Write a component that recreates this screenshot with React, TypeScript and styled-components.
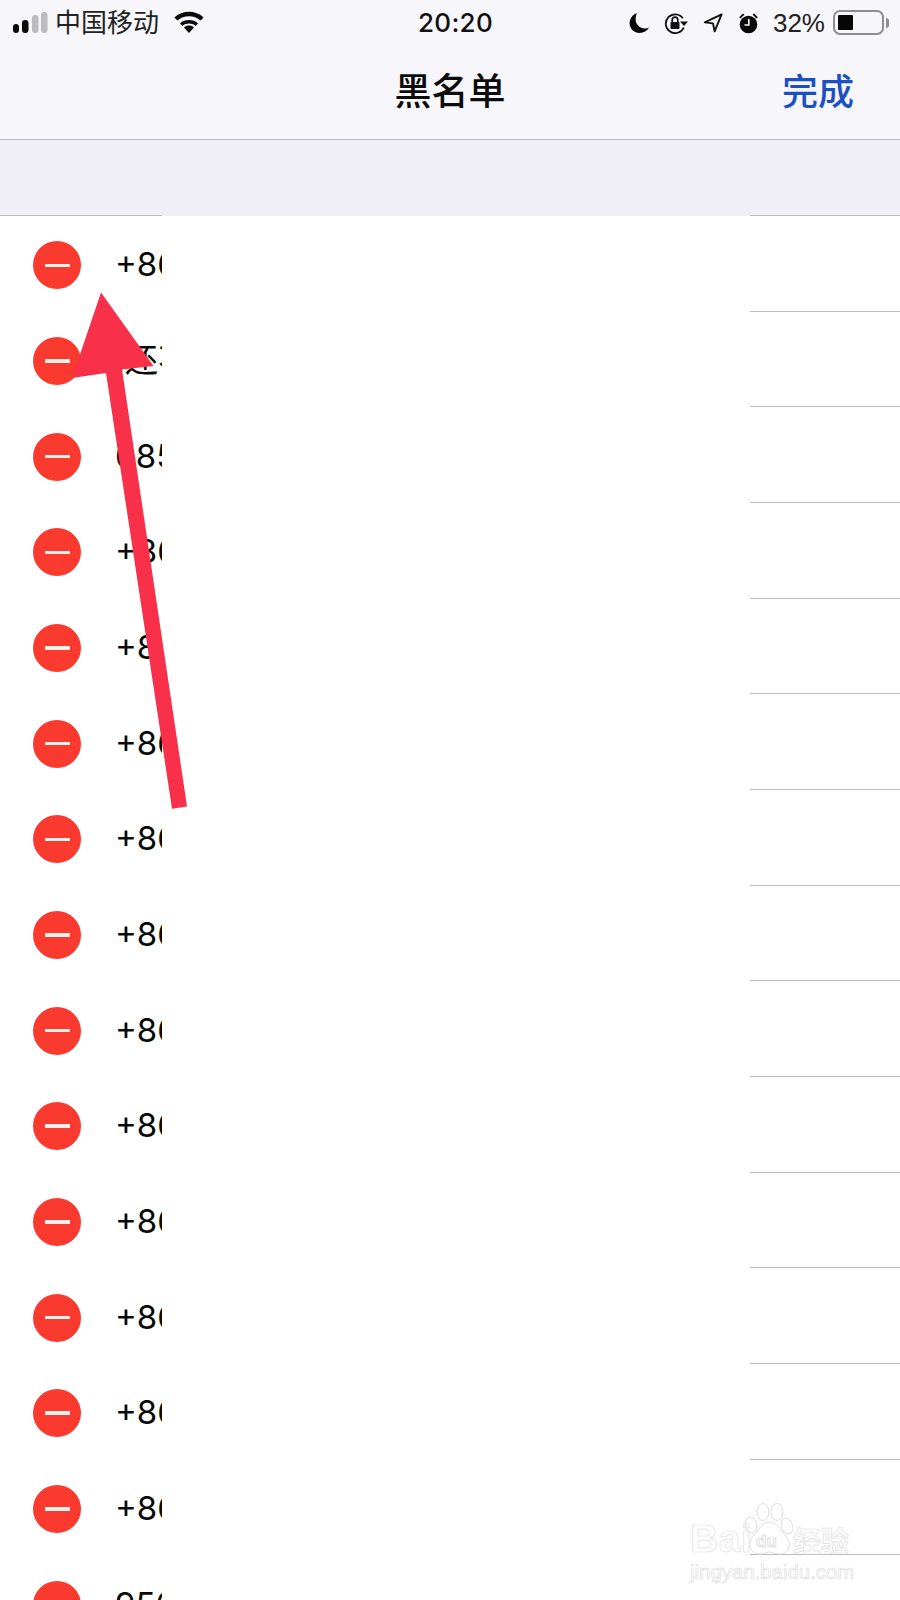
import React from "react";
import styled, { createGlobalStyle } from "styled-components";

const Global = createGlobalStyle`
  html, body { margin: 0; padding: 0; background: #fff; }
  #root { width: 900px; height: 1600px; }
`;

const Page = styled.div`
  position: relative;
  width: 900px;
  height: 1600px;
  overflow: hidden;
  background: #fff;
  font-family: "Liberation Sans", "Noto Sans CJK SC", sans-serif;
`;

const Header = styled.header`
  background: #f7f6fb;
  border-bottom: 1px solid #bdbcc0;
`;

const StatusBar = styled.div`
  height: 46px;
  display: grid;
  grid-template-columns: 1fr auto 1fr;
  align-items: center;
  padding: 0 11px 0 13px;
  color: #111;
`;

const StatusLeft = styled.div`
  display: flex;
  align-items: center;
`;

const StatusRight = styled.div`
  display: flex;
  align-items: center;
  justify-content: flex-end;
`;

const Carrier = styled.span`
  font-family: "Noto Sans CJK SC", sans-serif;
  font-size: 26px;
  line-height: 46px;
  margin: -4px 15px 0 6px;
  color: #222;
`;

const Clock = styled.span`
  font-family: "Inter", "Liberation Sans", sans-serif;
  font-size: 26px;
  font-weight: 500;
  line-height: 46px;
  letter-spacing: 0.3px;
  margin-left: 9px;
  color: #111;
`;

const Percent = styled.span`
  font-size: 26px;
  line-height: 46px;
  margin: 0 8px 0 14px;
  color: #222;
`;

const StatusIcon = styled.svg<{ $gap?: number }>`
  display: block;
  flex: none;
  margin-left: ${(p) => p.$gap ?? 0}px;
`;

const Battery = styled.span`
  box-sizing: border-box;
  width: 51px;
  height: 25px;
  margin-top: -1px;
  padding: 3px;
  border: 2px solid #8e8e90;
  border-radius: 7px;
  display: flex;
`;

const BatteryFill = styled.span`
  width: 15px;
  background: #060606;
  border-radius: 1px;
`;

const BatteryNub = styled.span`
  width: 3px;
  height: 10px;
  margin: 0 0 0 2px;
  background: #8e8e90;
  border-radius: 0 3px 3px 0;
`;

const NavBar = styled.nav`
  box-sizing: border-box;
  height: 93px;
  padding-bottom: 8px;
  display: grid;
  grid-template-columns: 1fr auto 1fr;
  align-items: center;
  font-family: "Noto Sans CJK SC", sans-serif;
  font-size: 36px;
  line-height: 46px;
`;

const Title = styled.h1`
  grid-column: 2;
  margin: 0;
  font-size: 37px;
  font-weight: 500;
  color: #0b0b0b;
`;

const Done = styled.span`
  justify-self: end;
  margin-right: 46px;
  font-weight: 500;
  color: #1b50c4;
`;

const SectionBand = styled.div`
  height: 76px;
  background: #f0eff7;
`;

const RowGrid = styled.div`
  display: grid;
  grid-template-columns: 162px 588px 150px;
`;

const TopRule = styled(RowGrid)`
  height: 1px;
  margin-top: -1px;
  position: relative;
`;

const RuleSegment = styled.div`
  height: 1px;
  background: #bcbcbe;
  align-self: end;
`;

const Row = styled(RowGrid)`
  height: 95.67px;
`;

const Left = styled.div`
  display: flex;
  flex-direction: column;
  min-width: 0;
`;

const Cell = styled.div`
  flex: 1;
  display: flex;
  align-items: center;
  padding-left: 33px;
  overflow: hidden;
`;

const Delete = styled.span`
  flex: none;
  box-sizing: border-box;
  width: 48px;
  height: 48px;
  margin-top: 4px;
  border-radius: 50%;
  background: #fb3a2f;
  display: flex;
  align-items: center;
  justify-content: center;
`;

const Minus = styled.span`
  width: 25px;
  height: 3.5px;
  background: #fcefea;
`;

const Phone = styled.span<{ $indent: number }>`
  flex: none;
  margin-left: ${(p) => 34 + p.$indent}px;
  margin-top: 2px;
  font-family: "Inter", "Noto Sans CJK SC", sans-serif;
  font-size: 33px;
  line-height: 40px;
  white-space: nowrap;
  color: #0a0a0a;
`;

const LeftRule = styled(RuleSegment)`
  margin-left: 43px;
`;

const Arrow = styled.svg`
  position: absolute;
  left: 0;
  top: 0;
  pointer-events: none;
`;

const Watermark = styled.div`
  position: absolute;
  left: 690px;
  top: 1503px;
  width: 170px;
  pointer-events: none;
  color: transparent;
  -webkit-text-stroke: 0.7px #dedede;
`;

const MarkTop = styled.div`
  display: flex;
  align-items: flex-end;
  height: 52px;
`;

const MarkBai = styled.span`
  font-size: 39px;
  line-height: 32px;
  font-weight: 700;
  letter-spacing: 0.5px;
  width: 55px;
`;

const MarkCn = styled.span`
  font-family: "Noto Sans CJK SC", sans-serif;
  font-size: 28px;
  font-weight: 700;
  line-height: 30px;
  white-space: nowrap;
`;

const MarkUrl = styled.div`
  margin-top: 6px;
  font-size: 20.4px;
  line-height: 22px;
  white-space: nowrap;
`;

const PawSvg = styled.svg`
  flex: none;
  display: block;
`;

const rows: { text: string; indent?: number }[] = [
  { text: "+86" },
  { text: "还不", indent: 10 },
  { text: "085" },
  ...Array.from({ length: 11 }, () => ({ text: "+86" })),
  { text: "956" },
];

export default function App() {
  return (
    <Page>
      <Global />
      <Header>
        <StatusBar>
          <StatusLeft>
            <StatusIcon width="36" height="24" viewBox="0 0 36 24">
              <rect x="0" y="13" width="6" height="9" rx="3" fill="#0b0b0b" />
              <rect x="9" y="9" width="6.5" height="13" rx="3" fill="#0b0b0b" />
              <rect x="19" y="4" width="6.5" height="18" rx="3" fill="#bcbcc0" />
              <rect x="28" y="1" width="6.5" height="21" rx="3" fill="#bcbcc0" />
            </StatusIcon>
            <Carrier>中国移动</Carrier>
            <StatusIcon width="30" height="24" viewBox="0 0 30 24">
              <path d="M15 22 L10 16.4 C13 14 17 14 20 16.4 Z" fill="#0b0b0b" />
              <path d="M6 12.4 C11 8 19 8 24 12.4 L21.6 15 C17.6 11.8 12.4 11.8 8.4 15 Z" fill="#0b0b0b" />
              <path d="M0.4 6.4 C8.8 -1 21.2 -1 29.6 6.4 L26.6 9.6 C20 3.8 10 3.8 3.4 9.6 Z" fill="#0b0b0b" />
            </StatusIcon>
          </StatusLeft>
          <Clock>20:20</Clock>
          <StatusRight>
            <StatusIcon width="21" height="22" viewBox="0 0 21 22">
              <path d="M8 1 C4 2.6 0.6 6.2 0.6 11 C0.6 16.8 5.2 21 10.6 21 C14.6 21 18.2 19 20.2 15.6 C19 16.2 17.4 16.4 16 16.4 C11 16.4 6.6 12.8 6.6 7.6 C6.6 5.2 7 3 8 1 Z" fill="#080808" />
            </StatusIcon>
            <StatusIcon $gap={14} width="25" height="22" viewBox="0 0 25 22">
              <path d="M18.8 6.2 A9.4 9.4 0 1 0 19.8 15.5" fill="none" stroke="#111" strokeWidth="1.8" />
              <path d="M16 9.5 H24 L20 14 Z" fill="#111" />
              <rect x="6.5" y="10" width="9" height="7" rx="1" fill="#111" />
              <path d="M8.2 10 V8 A2.8 2.8 0 0 1 13.8 8 V10" fill="none" stroke="#111" strokeWidth="1.7" />
            </StatusIcon>
            <StatusIcon $gap={14} width="20" height="20" viewBox="0 0 20 20">
              <path d="M18.6 1.4 L1.8 9.4 L10 10.4 L11.6 18.4 Z" fill="none" stroke="#111" strokeWidth="1.9" strokeLinejoin="round" />
            </StatusIcon>
            <StatusIcon $gap={15} width="21" height="22" viewBox="0 0 21 22">
              <circle cx="10.5" cy="12.5" r="8.8" fill="#080808" />
              <path d="M1.2 5.2 L5 1.6 L6.4 2.8 L2.4 6.6 Z M19.8 5.2 L16 1.6 L14.6 2.8 L18.6 6.6 Z" fill="#080808" />
              <path d="M10.8 7 V13 H6.5" fill="none" stroke="#f7f6fb" strokeWidth="1.6" />
            </StatusIcon>
            <Percent>32%</Percent>
            <Battery>
              <BatteryFill />
            </Battery>
            <BatteryNub />
          </StatusRight>
        </StatusBar>
        <NavBar>
          <Title>黑名单</Title>
          <Done>完成</Done>
        </NavBar>
      </Header>
      <SectionBand />
      <TopRule>
        <RuleSegment />
        <span />
        <RuleSegment />
      </TopRule>
      {rows.map((row, i) => (
        <Row key={i}>
          <Left>
            <Cell>
              <Delete>
                <Minus />
              </Delete>
              <Phone $indent={row.indent ?? 0}>{row.text}</Phone>
            </Cell>
            <LeftRule />
          </Left>
          <span />
          <RuleSegment />
        </Row>
      ))}
      <Arrow width="900" height="1600" viewBox="0 0 900 1600">
        <polygon
          points="101,292.5 153.5,366 122,369.5 187,806.5 172,808.7 106,373 72,378"
          fill="#f8304a"
        />
      </Arrow>
      <Watermark>
        <MarkTop>
          <MarkBai>Bai</MarkBai>
          <PawSvg width="48" height="52" viewBox="0 0 48 52">
            <g fill="none" stroke="#dedede" strokeWidth="1">
              <ellipse cx="6" cy="22" rx="5.5" ry="8" transform="rotate(-12 6 22)" />
              <ellipse cx="18" cy="9" rx="6" ry="8.5" />
              <ellipse cx="32" cy="9" rx="6" ry="8.5" />
              <ellipse cx="42" cy="23" rx="5.5" ry="8" transform="rotate(-20 42 23)" />
              <path d="M24 19 C16 19 14 28 9 32 C3 37 3 50 14 51 C19 51.5 21 49 24 49 C28 49 31 51.5 36 51 C46 50 46 38 40 32 C35 27 32 19 24 19 Z" />
              <text x="11" y="44" fontFamily="Liberation Sans, sans-serif" fontSize="17" fontWeight="700">du</text>
            </g>
          </PawSvg>
          <MarkCn>经验</MarkCn>
        </MarkTop>
        <MarkUrl>jingyan.baidu.com</MarkUrl>
      </Watermark>
    </Page>
  );
}
